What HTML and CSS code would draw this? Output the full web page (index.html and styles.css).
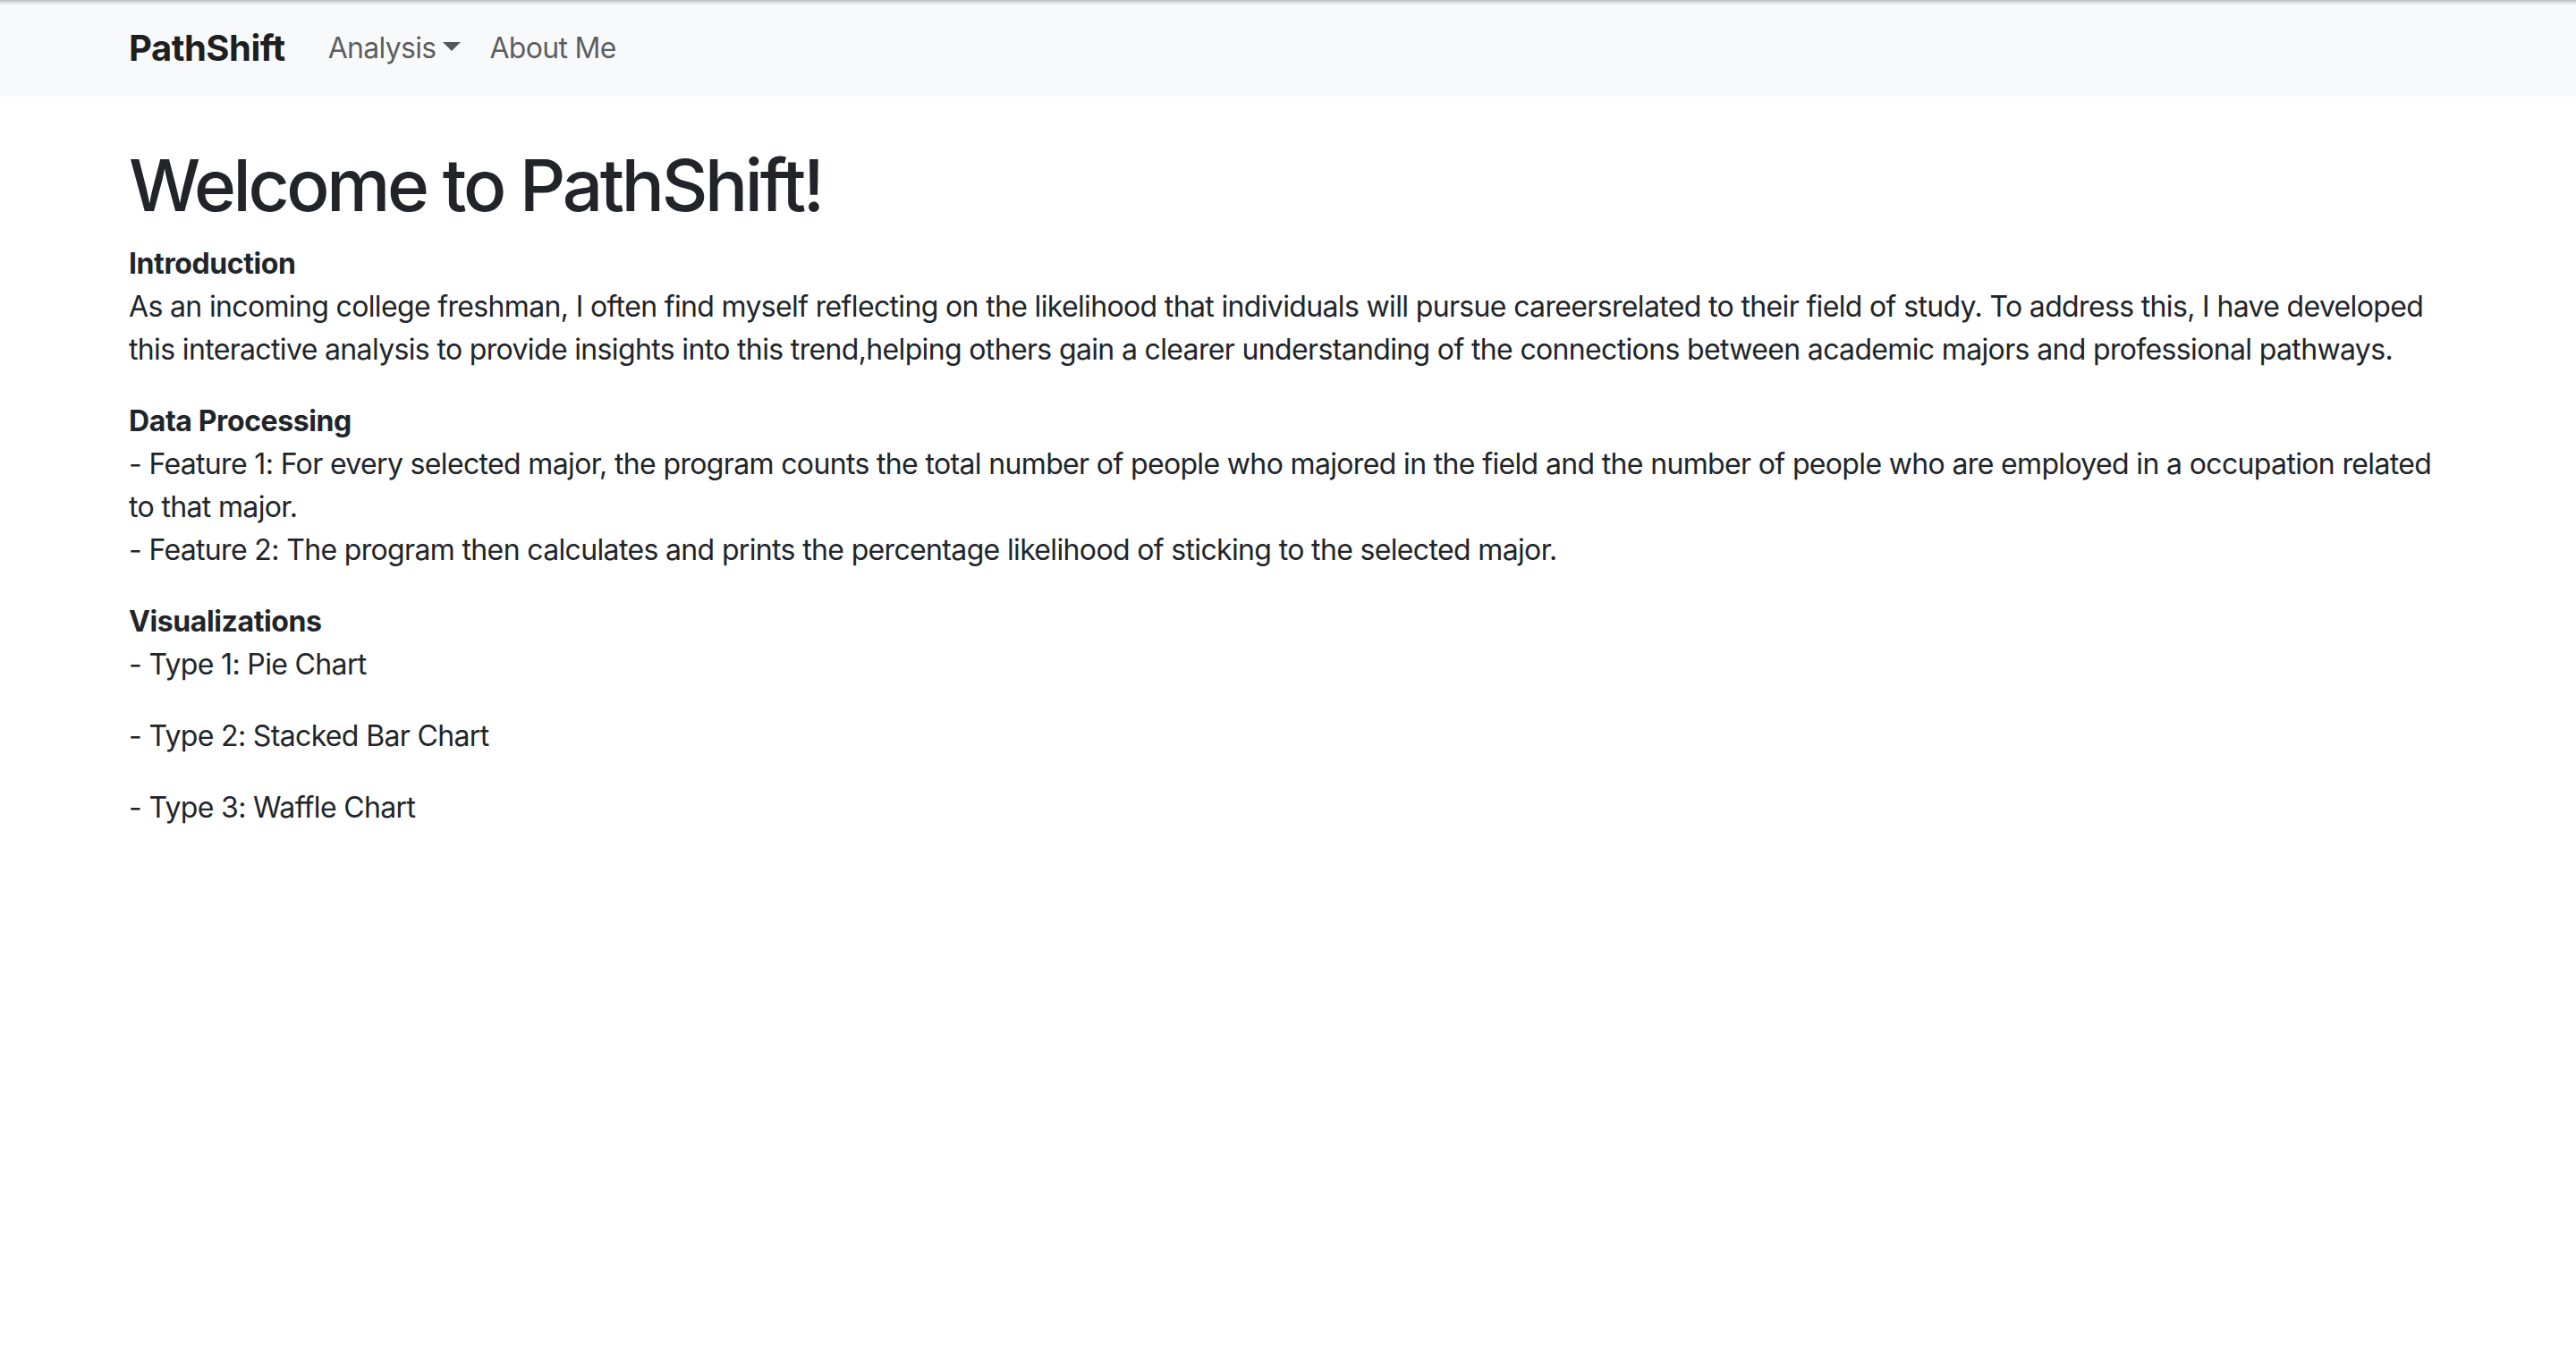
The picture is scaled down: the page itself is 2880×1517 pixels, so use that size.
FILE: index.html
```html
<!DOCTYPE html>
<html lang="en">
<head>
<meta charset="utf-8">
<title>PathShift</title>
<link rel="stylesheet" href="styles.css">
</head>
<body>
<nav class="navbar">
  <div class="container nav-inner">
    <a class="brand" href="#">PathShift</a>
    <ul class="nav-list">
      <li><a class="nav-link dropdown-toggle" href="#">Analysis</a></li>
      <li><a class="nav-link" href="#">About Me</a></li>
    </ul>
  </div>
</nav>
<main class="container content">
  <h1 class="title">Welcome to PathShift!</h1>
  <p><strong>Introduction</strong><br>As an incoming college freshman, I often find myself reflecting on the likelihood that individuals will pursue careersrelated to their field of study. To address this, I have developed this interactive analysis to provide insights into this trend,helping others gain a clearer understanding of the connections between academic majors and professional pathways.</p>
  <p><strong>Data Processing</strong><br>- Feature 1: For every selected major, the program counts the total number of people who majored in the field and the number of people who are employed in a occupation related to that major.<br>- Feature 2: The program then calculates and prints the percentage likelihood of sticking to the selected major.</p>
  <p><strong>Visualizations</strong><br>- Type 1: Pie Chart</p>
  <p>- Type 2: Stacked Bar Chart</p>
  <p>- Type 3: Waffle Chart</p>
</main>
</body>
</html>
```
FILE: styles.css
```css
* { box-sizing: border-box; }
html, body { margin: 0; padding: 0; }
body {
  font-family: Inter, "Noto Sans", "Liberation Sans", sans-serif;
  font-size: 32px;
  line-height: 1.5;
  color: #212529;
  background: #fff;
}
.container {
  max-width: 2640px;
  margin: 0 auto;
  padding: 0 24px;
}
.navbar {
  background: linear-gradient(to bottom, #b9babb 0px, #e2e3e4 3px, #f8f9fa 6px, #f8f9fa 100%);
  height: 108px;
  display: flex;
  align-items: center;
}
.nav-inner {
  width: 100%;
  display: flex;
  align-items: center;
}
.brand {
  font-size: 40px;
  font-weight: 700;
  color: rgba(0,0,0,.9);
  text-decoration: none;
  margin-right: 32px;
  letter-spacing: -0.5px;
}
.nav-list {
  display: flex;
  list-style: none;
  margin: 0;
  padding: 0;
}
.nav-link {
  display: block;
  padding: 16px;
  color: rgba(0,0,0,.65);
  text-decoration: none;
  letter-spacing: -0.7px;
}
.dropdown-toggle::after {
  content: "";
  display: inline-block;
  margin-left: 8px;
  vertical-align: 8px;
  border-top: 10px solid;
  border-left: 10px solid transparent;
  border-right: 10px solid transparent;
  border-bottom: 0;
}
.content { padding-top: 51px; }
.title {
  font-size: 80px;
  font-weight: 500;
  line-height: 1.2;
  margin: 0 0 16px;
  letter-spacing: -3.3px;
}
p {
  margin: 0 0 32px;
  letter-spacing: -0.65px;
}
strong { font-weight: 700; letter-spacing: -0.4px; }
```
